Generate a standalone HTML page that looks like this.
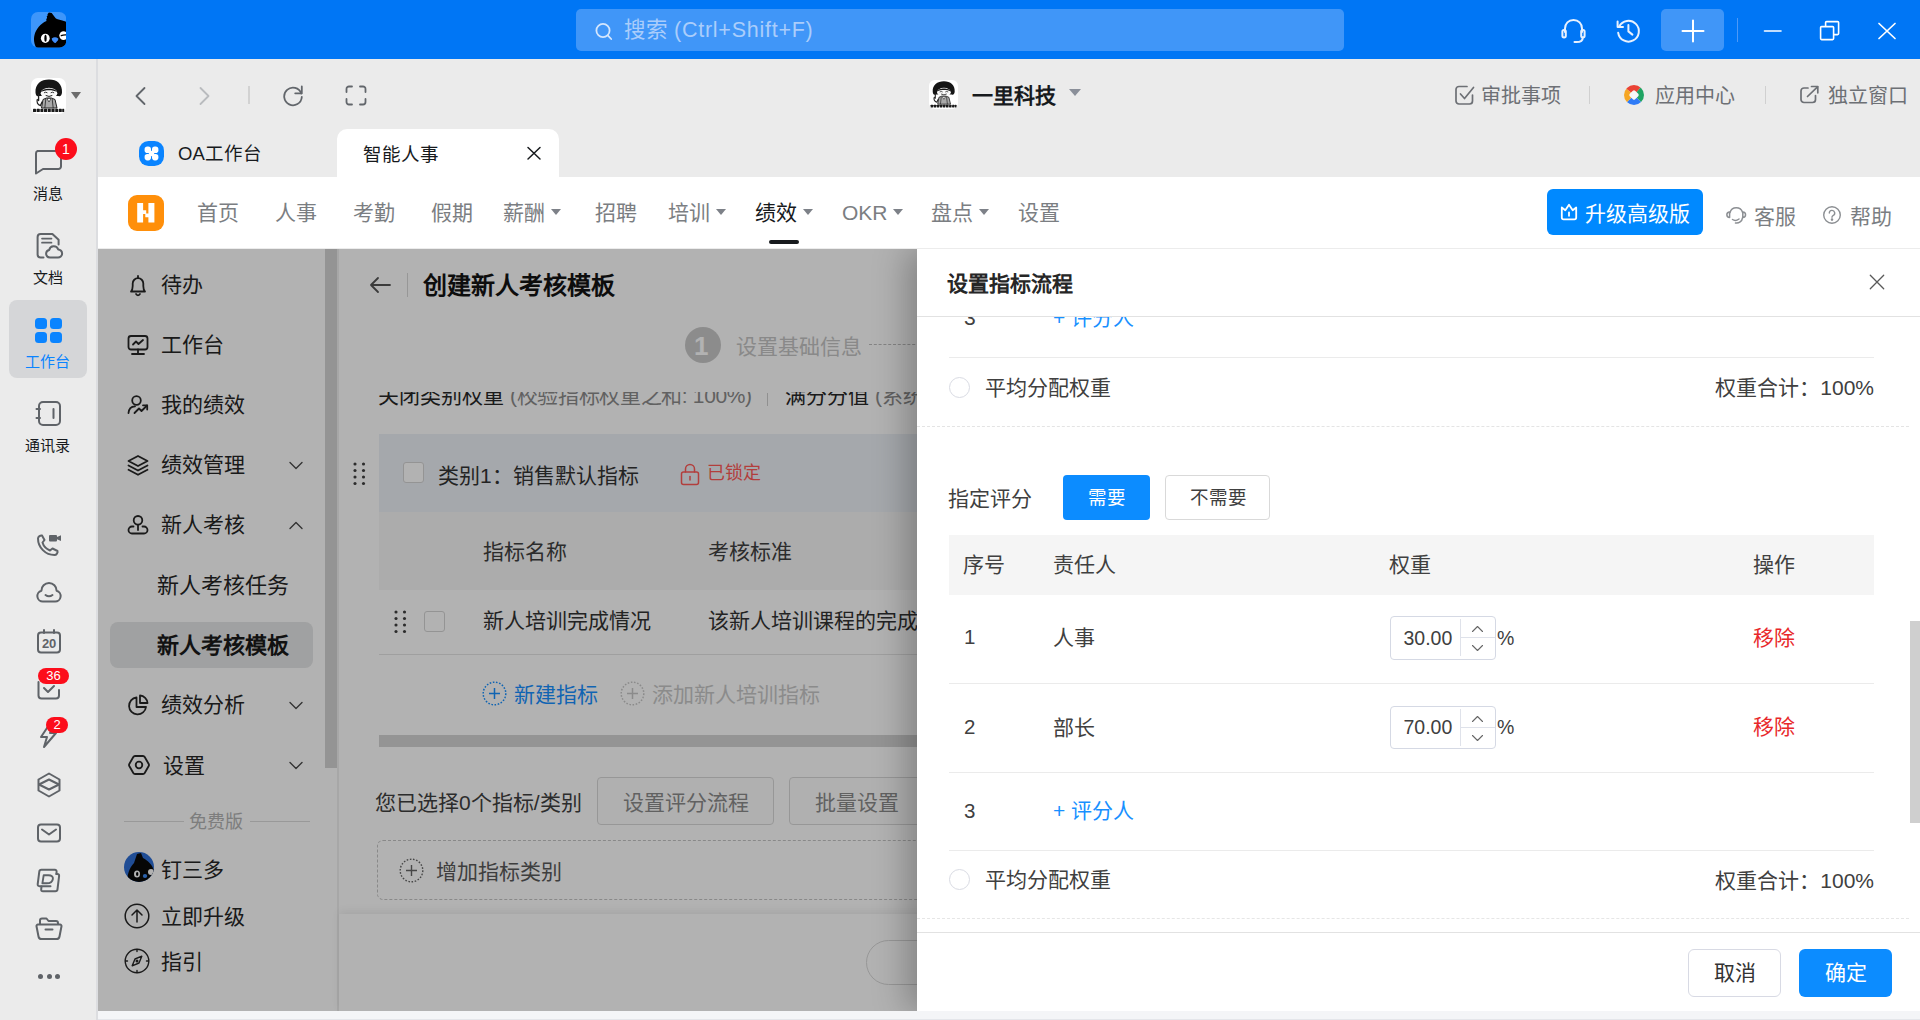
<!DOCTYPE html>
<html lang="zh-CN">
<head>
<meta charset="utf-8">
<title>DingTalk</title>
<style>
*{box-sizing:border-box;margin:0;padding:0}
html,body{width:1920px;height:1020px;overflow:hidden;background:#ebebeb;font-family:"Liberation Sans",sans-serif;color:#171a1d;line-height:1}
.abs{position:absolute}
svg{display:block}
/* ---------- title bar ---------- */
#titlebar{position:absolute;left:0;top:0;width:1920px;height:59px;background:#0076f5}
#search{position:absolute;left:576px;top:9px;width:768px;height:42px;border-radius:5px;background:#4096f8}
#search span{position:absolute;left:48px;top:11px;font-size:21.500px;color:#aacdfb;white-space:nowrap}#search span u{text-decoration:none;letter-spacing:.75px}
#plusbtn{position:absolute;left:1661px;top:9px;width:63px;height:42px;border-radius:5px;background:#4096f8}
/* ---------- left rail ---------- */
#rail{position:absolute;left:0;top:59px;width:98px;height:961px;background:#ebebeb;border-right:2px solid #dcdde0}
.rlabel{position:absolute;left:-1px;width:97px;text-align:center;font-size:15px;margin-top:1px;color:#171a1d;white-space:nowrap}
.badge{position:absolute;background:#fc0d1b;color:#fff;font-size:13px;text-align:center;border-radius:11px;height:22px;line-height:22px}
/* ---------- shell top ---------- */
#shell{position:absolute;left:98px;top:59px;width:1822px;height:118px;background:#ebebeb}
.toplink{position:absolute;font-size:20px;color:#6d7075;white-space:nowrap}
#tab2{position:absolute;left:337px;top:129px;width:222px;height:49px;background:#fff;border-radius:10px 10px 0 0}
#tab2 span{position:absolute;left:26px;top:17px;font-size:18.500px;color:#171a1d;white-space:nowrap}
/* ---------- app header ---------- */
#apphead{position:absolute;left:98px;top:177px;width:1822px;height:72px;background:#fff;border-bottom:1px solid #ececec}
.nav{position:absolute;top:25px;font-size:21px;color:#7b7e82;white-space:nowrap}
.nav.act{color:#171a1d}
.caret{display:inline-block;width:0;height:0;border-left:5.500px solid transparent;border-right:5.500px solid transparent;border-top:6.500px solid #7d8188;vertical-align:middle;margin-left:6px;margin-top:-4px}.nav.lat .caret{margin-left:5px}
#upgrade{position:absolute;left:1449px;top:12px;width:156px;height:46px;border-radius:6px;background:#0089ff;color:#fff;font-size:20px}
#upgrade span{position:absolute;left:38px;top:14px;font-size:21px;white-space:nowrap}
/* ---------- app body (under mask) ---------- */
#appbody{position:absolute;left:98px;top:249px;width:1822px;height:762px;background:#fff;overflow:hidden}
#bottomstrip{position:absolute;left:98px;top:1011px;width:1822px;height:9px;background:#f4f5f7;border-bottom:1px solid #e4e6ea}
#mask{position:absolute;left:98px;top:249px;width:819px;height:762px;background:rgba(0,0,0,.3)}
/* ---------- drawer ---------- */
#drawer{position:absolute;left:917px;top:249px;width:1003px;height:762px;background:#fff;box-shadow:-10px 0 32px rgba(0,0,0,.27);clip-path:inset(0 0 0 -60px)}
#dhead{position:absolute;left:0;top:0;width:1003px;height:68px;border-bottom:1px solid #e2e2e2;background:#fff}
#dhead b{position:absolute;left:30px;top:24px;font-size:21px;color:#262626;white-space:nowrap}
#dfoot{position:absolute;left:0;top:683px;width:1003px;height:78px;border-top:1px solid #e2e2e2;background:#fff}
</style>
</head>
<body>
<div id="titlebar">
  <!-- app logo -->
  <svg class="abs" style="left:30.700px;top:12px" width="35.300" height="35.600" viewBox="0 0 35.300 35.600">
    <defs><clipPath id="lg"><rect x="0" y="0" width="35.300" height="35.600" rx="7"/></clipPath></defs>
    <rect x="0" y="0" width="35.300" height="35.600" rx="7" fill="#3e96fa"/>
    <g clip-path="url(#lg)">
      <path d="M5.400 36 C2.600 31.500 2.600 26.500 3.500 23 C5 17 9.500 11.500 15.500 8.900 L15.200 7.500 L16.100 5.700 L15.700 4.300 L16.700 3.400 L16.500 2.300 L17.900 0.500 L20.700 0.900 L23.500 4.700 C24.300 5.800 25 6.600 25.900 7.050 C28 8 31 8.300 32.900 8.900 C34 9.300 36 10 36 10 V36 Z" fill="#000"/>
      <ellipse cx="14.300" cy="26.300" rx="4.400" ry="4.600" fill="#fff"/><ellipse cx="14.500" cy="26.300" rx="1.150" ry="3.500" fill="#000"/>
      <circle cx="32.600" cy="23.600" r="4.300" fill="#fff"/><path d="M30.300 23.700 Q32.500 22.600 35.500 22.900" stroke="#000" stroke-width="1.300" fill="none" stroke-linecap="round"/>
      <path d="M20.700 26.600 Q24 24 27.300 26.600 Q27.600 28.300 24.600 30.900 Q23.800 31.200 23 30.600 Q20.300 28.300 20.700 26.600 Z" fill="#3f8cf8"/>
    </g>
  </svg>
  <div id="search"><span>搜索 <u>(Ctrl+Shift+F)</u></span>
    <svg class="abs" style="left:17px;top:11px" width="22" height="22" viewBox="0 0 22 22" fill="none" stroke="#d4e6fd" stroke-width="1.8" stroke-linecap="round"><circle cx="10" cy="10.5" r="6.6"/><path d="M15 15.6 L18.2 19"/></svg>
  </div>
  <!-- headset -->
  <svg class="abs" style="left:1559px;top:17px" width="28" height="28" viewBox="0 0 28 28" fill="none" stroke="#e8f1fe" stroke-width="2" stroke-linecap="round" stroke-linejoin="round">
    <path d="M6 15 V11.5 C6 6.5 9.6 3 14.5 3 C19.4 3 23 6.5 23 11.5 V15"/>
    <rect x="3.4" y="13" width="3.4" height="7.4" rx="1.6"/>
    <rect x="22.2" y="13" width="3.4" height="7.4" rx="1.6"/>
    <path d="M23.8 20.4 C23.8 23.4 21 25 17.6 25 H15.5"/>
  </svg>
  <!-- history -->
  <svg class="abs" style="left:1614px;top:17px" width="28" height="28" viewBox="0 0 28 28" fill="none" stroke="#e8f1fe" stroke-width="2" stroke-linecap="round" stroke-linejoin="round">
    <path d="M5.2 9.5 A10.4 10.4 0 1 1 4.2 15.8"/>
    <path d="M3.6 4.6 V10 H9"/>
    <path d="M14.4 8 V14.4 L18.4 17.6"/>
  </svg>
  <div id="plusbtn"><svg class="abs" style="left:20px;top:10px" width="24" height="24" viewBox="0 0 24 24" stroke="#fff" stroke-width="2" stroke-linecap="round"><path d="M1.5 12 H22.5 M12 1.5 V22.5"/></svg></div>
  <div class="abs" style="left:1737px;top:18px;width:1px;height:24px;background:#4d99f8"></div>
  <svg class="abs" style="left:1763px;top:20px" width="20" height="22" viewBox="0 0 20 22" stroke="#fff" stroke-width="1.6" stroke-linecap="round"><path d="M1.5 11 H18"/></svg>
  <svg class="abs" style="left:1819px;top:20px" width="22" height="22" viewBox="0 0 22 22" fill="none" stroke="#fff" stroke-width="1.6" stroke-linejoin="round"><rect x="1.6" y="6.6" width="13" height="13" rx="1"/><path d="M6.6 6 V2.6 a1 1 0 0 1 1 -1 H18.6 a1 1 0 0 1 1 1 V13.6 a1 1 0 0 1 -1 1 H15"/></svg>
  <svg class="abs" style="left:1876px;top:20px" width="22" height="22" viewBox="0 0 22 22" stroke="#fff" stroke-width="1.7" stroke-linecap="round"><path d="M3 3.5 L19 18.5 M19 3.5 L3 18.5"/></svg>
</div>
<div id="rail"></div>
<div id="railc">
  <!-- user avatar -->
  <svg class="abs" style="left:31px;top:78px" width="35" height="36" viewBox="0 0 35 36">
    <rect width="35" height="36" rx="7" fill="#fff"/>
    <path d="M4.500 14.500 C4 6 10 1.500 18 1.500 C26 1.500 31.500 6 31 14.500 C30.800 17.500 29 19 27.500 18 L8 18 C6 19 4.700 17.500 4.500 14.500 Z" fill="#161616"/>
    <ellipse cx="18" cy="15.300" rx="8.300" ry="5.600" fill="#fafafa"/>
    <path d="M10 14 C11 9.500 25 9.500 26 14 C22 11.800 14 11.800 10 14 Z" fill="#161616"/>
    <path d="M13.300 14.600 q1.400 -1 2.800 0 M20 14.600 q1.400 -1 2.800 0" stroke="#222" stroke-width=".9" fill="none" stroke-linecap="round"/>
    <path d="M15 17.600 q3 1.900 6 0" stroke="#222" stroke-width="1" fill="none" stroke-linecap="round"/>
    <path d="M10.500 30 L12 21.500 L15.500 20 L20.500 20 L24 21.500 L26 30 Z" fill="#a9a9a9" stroke="#222" stroke-width="1"/>
    <path d="M16 20.500 L18 24 L20 20.500 Z" fill="#fff" stroke="#222" stroke-width=".7"/>
    <path d="M14.800 21 L13.800 30 M21.200 21 L22.200 30" stroke="#222" stroke-width=".8"/>
    <path d="M7.600 16.500 V22.500 M6.300 21.500 C5.500 24 6.500 27 9.500 27.500 L11 24" stroke="#222" stroke-width="1.300" fill="none" stroke-linecap="round"/>
    <g fill="#1a1a1a"><rect x="2" y="30.800" width="3" height="3.200" rx=".6"/><rect x="5.600" y="30.800" width="3.200" height="3.200" rx=".6"/><rect x="9.400" y="30.800" width="3" height="3.200" rx=".6"/><rect x="13" y="30.800" width="3.200" height="3.200" rx=".6"/><rect x="16.800" y="30.800" width="3" height="3.200" rx=".6"/><rect x="20.400" y="30.800" width="3.200" height="3.200" rx=".6"/><rect x="24.200" y="30.800" width="3" height="3.200" rx=".6"/><rect x="27.800" y="30.800" width="3" height="3.200" rx=".6"/><rect x="31.200" y="30.800" width="2" height="3.200" rx=".6"/></g>
  </svg>
  <div class="abs" style="left:70.500px;top:92px;width:0;height:0;border-left:5px solid transparent;border-right:5px solid transparent;border-top:7px solid #6c6c6c"></div>
  <!-- message -->
  <svg class="abs" style="left:33px;top:148px" width="32" height="30" viewBox="0 0 32 30" fill="none" stroke="#5f6368" stroke-width="2" stroke-linecap="round" stroke-linejoin="round"><path d="M4.5 3 H25.5 a2.5 2.5 0 0 1 2.5 2.5 V18.5 a2.5 2.5 0 0 1 -2.5 2.500 H10 L3 25.500 V5.500 A2.500 2.500 0 0 1 4.500 3 Z"/></svg>
  <div class="badge" style="left:55px;top:138px;width:22px;font-size:14px">1</div>
  <div class="rlabel" style="top:185px">消息</div>
  <!-- docs -->
  <svg class="abs" style="left:34px;top:231px" width="30" height="30" viewBox="0 0 30 30" fill="none" stroke="#5f6368" stroke-width="2" stroke-linecap="round" stroke-linejoin="round"><path d="M9.500 26.600 H6.600 a3 3 0 0 1 -3 -3 V6 a3 3 0 0 1 3 -3 H18.400 L24.600 8.800 V13.600"/><path d="M8 7.600 H17.500 M8 11.700 H17.500" stroke-width="1.700"/><path d="M15.800 26.600 a3.900 3.900 0 0 1 -0.600 -7.700 a4.700 4.700 0 0 1 9 -0.500 a4.100 4.100 0 0 1 -0.400 8.200 Z"/></svg>
  <div class="rlabel" style="top:269px">文档</div>
  <!-- workbench selected -->
  <div class="abs" style="left:9px;top:300px;width:78px;height:78px;border-radius:8px;background:#d5d6d8"></div>
  <div class="abs" style="left:35px;top:318px;width:12px;height:11px;border-radius:3.500px;background:#0a84ff"></div>
  <div class="abs" style="left:50px;top:318px;width:12px;height:11px;border-radius:3.500px;background:#0a84ff"></div>
  <div class="abs" style="left:35px;top:332px;width:12px;height:11px;border-radius:3.500px;background:#0a84ff"></div>
  <div class="abs" style="left:50px;top:332px;width:12px;height:11px;border-radius:3.500px;background:#0a84ff"></div>
  <div class="rlabel" style="top:353px;color:#0a84ff">工作台</div>
  <!-- contacts -->
  <svg class="abs" style="left:34px;top:399px" width="30" height="30" viewBox="0 0 30 30" fill="none" stroke="#5f6368" stroke-width="2" stroke-linecap="round" stroke-linejoin="round"><rect x="5" y="3" width="21" height="23" rx="4"/><path d="M19.500 10 V19"/><path d="M2.500 10 H6 M2.500 19 H6"/></svg>
  <div class="rlabel" style="top:437px">通讯录</div>
  <!-- phone -->
  <svg class="abs" style="left:35px;top:532px" width="28" height="26" viewBox="0 0 28 26" fill="none" stroke="#5f6368" stroke-width="2" stroke-linecap="round" stroke-linejoin="round"><path d="M3 6.500 C3 4.500 5.500 3 7 3.500 L9.500 8 L7.500 10.500 C8.500 14 11.500 17 15 18.500 L17.500 16.500 L22.500 19 C23 20.500 21.500 23 19.500 23 C10.500 23 3 15.500 3 6.500 Z"/><rect x="14" y="3" width="8" height="6.500" rx="1" fill="#5f6368" stroke="none"/><path d="M22 5 L26 3.200 V9 L22 7.200 Z" fill="#5f6368" stroke="none"/></svg>
  <!-- cloud face -->
  <svg class="abs" style="left:35px;top:580px" width="28" height="24" viewBox="0 0 28 24" fill="none" stroke="#5f6368" stroke-width="2" stroke-linecap="round" stroke-linejoin="round"><path d="M8 21.500 a5.500 5.500 0 0 1 -1.600 -10.800 a7.600 7.600 0 0 1 15.200 0 A5.500 5.500 0 0 1 20 21.500 Z"/><path d="M10.500 15 q3.500 2.600 7 0"/></svg>
  <!-- calendar -->
  <svg class="abs" style="left:35px;top:628px" width="28" height="27" viewBox="0 0 28 27" fill="none" stroke="#5f6368" stroke-width="2" stroke-linecap="round" stroke-linejoin="round"><rect x="3" y="4.500" width="22" height="20" rx="3"/><path d="M9 2 V5 M19 2 V5"/></svg>
  <div class="abs" style="left:38px;top:637px;width:22px;text-align:center;font-size:13px;font-weight:bold;color:#5f6368;letter-spacing:-.3px">20</div>
  <!-- todo -->
  <svg class="abs" style="left:35px;top:676px" width="28" height="26" viewBox="0 0 28 26" fill="none" stroke="#5f6368" stroke-width="2" stroke-linecap="round" stroke-linejoin="round"><path d="M3.500 6 V19.500 a3 3 0 0 0 3 3 H21 a3 3 0 0 0 3 -3 V14"/><path d="M9 12 L13 16 L19 10"/></svg>
  <div class="badge" style="left:38px;top:668px;width:31px;height:16px;line-height:16px;font-size:13px">36</div>
  <!-- lightning -->
  <svg class="abs" style="left:36px;top:722px" width="26" height="28" viewBox="0 0 26 28" fill="none" stroke="#5f6368" stroke-width="2" stroke-linecap="round" stroke-linejoin="round"><path d="M13 3 L5 15 H11 L8 25 L20 11 H14 L17 3"/></svg>
  <div class="badge" style="left:46px;top:717px;width:22px;height:16px;line-height:16px;font-size:13px">2</div>
  <!-- hex layers -->
  <svg class="abs" style="left:35px;top:771px" width="28" height="28" viewBox="0 0 28 28" fill="none" stroke="#5f6368" stroke-width="2" stroke-linecap="round" stroke-linejoin="round"><path d="M14 2.500 L24.500 8.500 V19.500 L14 25.500 L3.500 19.500 V8.500 Z"/><path d="M4 13.500 L14 8.500 L24 13.500 L14 18.500 Z"/></svg>
  <!-- mail -->
  <svg class="abs" style="left:35px;top:821px" width="28" height="24" viewBox="0 0 28 24" fill="none" stroke="#5f6368" stroke-width="2" stroke-linecap="round" stroke-linejoin="round"><rect x="3" y="3.500" width="22" height="17" rx="3"/><path d="M7 8.500 L14 13.500 L21 8.500"/></svg>
  <!-- D -->
  <svg class="abs" style="left:35px;top:867px" width="28" height="27" viewBox="0 0 28 27" fill="none" stroke="#5f6368" stroke-width="2" stroke-linecap="round" stroke-linejoin="round"><path d="M21.400 7 L21.600 4.800 Q21.800 2.800 19.800 2.800 H6.400 Q4.500 2.800 4.300 4.700 L2.700 17.200 Q2.500 19.200 4.500 19.200 H15.500"/><path d="M21.400 7 H22.300 Q24.300 7 24.100 9 L22.500 22.400 Q22.300 24.300 20.300 24.300 H8 Q6 24.300 6.200 22.400 L6.500 19.400"/><path d="M8.700 8.200 L7.400 16.300 H11.500 C15.300 16.300 17.600 14.200 17.900 11.800 C18.200 9.500 16.500 8.200 13.500 8.200 Z" stroke-width="1.900"/></svg>
  <!-- folder box -->
  <svg class="abs" style="left:34px;top:915px" width="30" height="27" viewBox="0 0 30 27" fill="none" stroke="#5f6368" stroke-width="2" stroke-linecap="round" stroke-linejoin="round"><path d="M6 9 V5.500 a2 2 0 0 1 2 -2 H12.500 L14.500 6 H22 a2 2 0 0 1 2 2 V9"/><path d="M4 9.500 H26 a1.500 1.500 0 0 1 1.500 1.800 L25.500 21.500 a3 3 0 0 1 -3 2.500 H7.500 a3 3 0 0 1 -3 -2.500 L2.500 11.300 A1.500 1.500 0 0 1 4 9.500 Z"/><path d="M11.500 14.500 H18.500"/></svg>
  <!-- dots -->
  <div class="abs" style="left:38px;top:974px;width:5px;height:5px;border-radius:50%;background:#5f6368"></div>
  <div class="abs" style="left:46.500px;top:974px;width:5px;height:5px;border-radius:50%;background:#5f6368"></div>
  <div class="abs" style="left:55px;top:974px;width:5px;height:5px;border-radius:50%;background:#5f6368"></div>
</div>
<div id="shell">
  <svg class="abs" style="left:35px;top:27px" width="16" height="20" viewBox="0 0 16 20" fill="none" stroke="#62666b" stroke-width="1.8" stroke-linecap="round" stroke-linejoin="round"><path d="M11.500 2 L3.500 10 L11.500 18"/></svg>
  <svg class="abs" style="left:98px;top:27px" width="16" height="20" viewBox="0 0 16 20" fill="none" stroke="#b9bbbe" stroke-width="1.8" stroke-linecap="round" stroke-linejoin="round"><path d="M4.500 2 L12.500 10 L4.500 18"/></svg>
  <div class="abs" style="left:150px;top:27px;width:2px;height:18px;background:#d2d2d2"></div>
  <svg class="abs" style="left:183px;top:24px" width="24" height="24" viewBox="0 0 24 24" fill="none" stroke="#62666b" stroke-width="1.8" stroke-linecap="round" stroke-linejoin="round"><path d="M20.300 10.500 A8.800 8.800 0 1 0 20.800 14"/><path d="M20.800 3.500 V10.300 H14.200"/></svg>
  <svg class="abs" style="left:246px;top:25px" width="24" height="24" viewBox="0 0 24 24" fill="none" stroke="#62666b" stroke-width="1.8" stroke-linecap="round" stroke-linejoin="round"><path d="M2.500 8 V5 a2.500 2.500 0 0 1 2.500 -2.500 H8"/><path d="M16 2.500 H19 a2.500 2.500 0 0 1 2.500 2.500 V8"/><path d="M21.500 15 V18 a2.500 2.500 0 0 1 -2.500 2.500 H16"/><path d="M8 20.500 H5 a2.500 2.500 0 0 1 -2.500 -2.500 V15"/></svg>
  <!-- company -->
  <svg class="abs" style="left:830.500px;top:21px" width="29" height="29" viewBox="0 0 35 36" preserveAspectRatio="none">
    <rect width="35" height="36" rx="7" fill="#fff"/>
    <path d="M4.500 14.500 C4 6 10 1.500 18 1.500 C26 1.500 31.500 6 31 14.500 C30.800 17.500 29 19 27.500 18 L8 18 C6 19 4.700 17.500 4.500 14.500 Z" fill="#161616"/>
    <ellipse cx="18" cy="15.300" rx="8.300" ry="5.600" fill="#fafafa"/>
    <path d="M10 14 C11 9.500 25 9.500 26 14 C22 11.800 14 11.800 10 14 Z" fill="#161616"/>
    <path d="M13.300 14.600 q1.400 -1 2.800 0 M20 14.600 q1.400 -1 2.800 0" stroke="#222" stroke-width=".9" fill="none" stroke-linecap="round"/>
    <path d="M15 17.600 q3 1.900 6 0" stroke="#222" stroke-width="1" fill="none" stroke-linecap="round"/>
    <path d="M10.500 30 L12 21.500 L15.500 20 L20.500 20 L24 21.500 L26 30 Z" fill="#a9a9a9" stroke="#222" stroke-width="1"/>
    <path d="M16 20.500 L18 24 L20 20.500 Z" fill="#fff" stroke="#222" stroke-width=".7"/>
    <path d="M14.800 21 L13.800 30 M21.200 21 L22.200 30" stroke="#222" stroke-width=".8"/>
    <path d="M7.600 16.500 V22.500 M6.300 21.500 C5.500 24 6.500 27 9.500 27.500 L11 24" stroke="#222" stroke-width="1.300" fill="none" stroke-linecap="round"/>
    <g fill="#1a1a1a"><rect x="2" y="30.800" width="3" height="3.200" rx=".6"/><rect x="5.600" y="30.800" width="3.200" height="3.200" rx=".6"/><rect x="9.400" y="30.800" width="3" height="3.200" rx=".6"/><rect x="13" y="30.800" width="3.200" height="3.200" rx=".6"/><rect x="16.800" y="30.800" width="3" height="3.200" rx=".6"/><rect x="20.400" y="30.800" width="3.200" height="3.200" rx=".6"/><rect x="24.200" y="30.800" width="3" height="3.200" rx=".6"/><rect x="27.800" y="30.800" width="3" height="3.200" rx=".6"/><rect x="31.200" y="30.800" width="2" height="3.200" rx=".6"/></g>
  </svg>
  <div class="abs" style="left:874px;top:26px;font-size:21px;font-weight:bold;color:#171a1d;white-space:nowrap">一里科技</div>
  <div class="abs" style="left:971px;top:30px;width:0;height:0;border-left:6px solid transparent;border-right:6px solid transparent;border-top:7.500px solid #8a8f99"></div>
  <!-- links -->
  <svg class="abs" style="left:1355px;top:24px" width="24" height="24" viewBox="0 0 24 24" fill="none" stroke="#6d7075" stroke-width="1.700" stroke-linecap="round" stroke-linejoin="round"><path d="M19.500 12 V18 a3 3 0 0 1 -3 3 H6 a3 3 0 0 1 -3 -3 V6.500 a3 3 0 0 1 3 -3 H14"/><path d="M7.500 11 L11.500 15.500 L20.500 4.500"/></svg>
  <div class="toplink" style="left:1383px;top:27px">审批事项</div>
  <div class="abs" style="left:1491px;top:27px;width:1px;height:18px;background:#d0d0d0"></div>
  <svg class="abs" style="left:1525px;top:25px" width="22" height="22" viewBox="0 0 22 22"><defs><clipPath id="acc"><circle cx="11" cy="11" r="10"/></clipPath></defs><g clip-path="url(#acc)"><path d="M11 11 L1 3 L11 -3 L19 2 Z" fill="#ea4335"/><path d="M11 11 L19 2 L25 11 L20 20 Z" fill="#1fa463"/><path d="M11 11 L20 20 L11 25 L3 19 Z" fill="#2f7bf6"/><path d="M11 11 L3 19 L-3 11 L1 3 Z" fill="#f6a623"/></g><rect x="7.200" y="7.200" width="7.600" height="7.600" rx="1.600" fill="#f7f7f7" transform="rotate(45 11 11)"/></svg>
  <div class="toplink" style="left:1557px;top:27px">应用中心</div>
  <div class="abs" style="left:1667px;top:27px;width:1px;height:18px;background:#d0d0d0"></div>
  <svg class="abs" style="left:1701px;top:25px" width="22" height="22" viewBox="0 0 22 22" fill="none" stroke="#6d7075" stroke-width="1.700" stroke-linecap="round" stroke-linejoin="round"><path d="M16.500 11.500 V15.500 a3 3 0 0 1 -3 3 H5 a3 3 0 0 1 -3 -3 V7 a3 3 0 0 1 3 -3 H9"/><path d="M8.500 12.500 L18.500 2.800"/><path d="M12.500 2.500 H18.800 V8.800"/></svg>
  <div class="toplink" style="left:1730px;top:27px">独立窗口</div>
  <!-- OA tab -->
  <svg class="abs" style="left:41px;top:82px" width="25" height="25" viewBox="0 0 25 25"><rect width="25" height="25" rx="9.500" fill="#0a84ff"/><g fill="#fff"><rect x="5.600" y="5.600" width="6.400" height="6.400" rx="2.800"/><rect x="13" y="5.600" width="6.400" height="6.400" rx="2.800"/><rect x="5.600" y="13" width="6.400" height="6.400" rx="2.800"/><rect x="13" y="13" width="6.400" height="6.400" rx="2.800"/><rect x="9.800" y="9.800" width="5.400" height="5.400"/></g></svg>
  <div class="abs" style="left:80px;top:86px;font-size:18.500px;color:#171a1d;white-space:nowrap">OA工作台</div>
</div>
<div id="tab2"><span>智能人事</span>
  <svg class="abs" style="left:189px;top:16px" width="16" height="16" viewBox="0 0 16 16" stroke="#171a1d" stroke-width="1.500" stroke-linecap="round"><path d="M2 2.500 L14 14 M14 2.500 L2 14"/></svg>
</div>
<div id="apphead">
  <svg class="abs" style="left:30px;top:18px" width="36" height="36" viewBox="0 0 36 36"><rect width="36" height="36" rx="9" fill="#ff8f0a"/><path d="M9.200 8 H15.100 V15.300 H18.200 V18.600 H20.400 V8 H26.400 V27.500 H20.400 V22.300 H17.300 V19 H15.100 V27.500 H9.200 Z" fill="#fff"/></svg>
  <div class="nav" style="left:99px">首页</div>
  <div class="nav" style="left:177px">人事</div>
  <div class="nav" style="left:255px">考勤</div>
  <div class="nav" style="left:333px">假期</div>
  <div class="nav" style="left:405px">薪酬<i class="caret"></i></div>
  <div class="nav" style="left:497px">招聘</div>
  <div class="nav" style="left:570px">培训<i class="caret"></i></div>
  <div class="nav act" style="left:657px">绩效<i class="caret"></i></div>
  <div class="abs" style="left:671px;top:63px;width:30px;height:4px;border-radius:2px;background:#171a1d"></div>
  <div class="nav lat" style="left:744px">OKR<i class="caret"></i></div>
  <div class="nav" style="left:833px">盘点<i class="caret"></i></div>
  <div class="nav" style="left:920px">设置</div>
  <div id="upgrade"><span>升级高级版</span>
    <svg class="abs" style="left:12px;top:13px" width="20" height="20" viewBox="0 0 20 20" fill="none" stroke="#fff" stroke-width="1.800" stroke-linecap="round" stroke-linejoin="round"><path d="M2.800 5.500 L6.300 8.300 L10 2.800 L13.700 8.300 L17.200 5.500 V15.500 a1.800 1.800 0 0 1 -1.800 1.800 H4.600 a1.800 1.800 0 0 1 -1.800 -1.800 Z"/><path d="M10 10.500 V13.800"/></svg>
  </div>
  <svg class="abs" style="left:1627px;top:27px" width="22" height="22" viewBox="0 0 22 22" fill="none" stroke="#8c8f93" stroke-width="1.500" stroke-linecap="round" stroke-linejoin="round"><path d="M5 8.500 a6.600 6.600 0 0 1 12.600 0"/><path d="M17.800 8 a2.600 2.600 0 0 1 0 5.500 V8 Z"/><path d="M4.600 8 a2.600 2.600 0 0 0 0 5.500 V8 Z"/><path d="M17.500 13.800 C17 17.500 14 19.500 10.500 19 "/><path d="M7.500 15.500 q3 2 6.500 -.5"/></svg>
  <div class="abs" style="left:1656px;top:29px;font-size:21px;color:#7b7e82;white-space:nowrap">客服</div>
  <svg class="abs" style="left:1724px;top:28px" width="20" height="20" viewBox="0 0 20 20" fill="none" stroke="#8c8f93" stroke-width="1.400" stroke-linecap="round" stroke-linejoin="round"><circle cx="10" cy="10" r="8.300"/><path d="M7.300 8 a2.700 2.700 0 1 1 3.700 2.600 c-.8 .4 -1 .9 -1 1.700"/><circle cx="10" cy="14.600" r=".6" fill="#8c8f93"/></svg>
  <div class="abs" style="left:1752px;top:29px;font-size:21px;color:#7b7e82;white-space:nowrap">帮助</div>
</div>
<div id="appbody">
<!--AB-->
<div class="abs" style="left:0px;top:-1px;width:227px;height:764px;background:#fff"></div>
<div class="abs" style="left:227px;top:-1px;width:12px;height:520px;background:#d4d4d4"></div>
<div class="abs" style="left:239px;top:-1px;width:2px;height:764px;background:#f0f0f0"></div>
<svg class="abs" style="left:28px;top:24px" width="24" height="24" viewBox="0 0 24 24" fill="none" stroke="#262626" stroke-width="1.8" stroke-linecap="round" stroke-linejoin="round"><path d="M5 18.5 H19 C17.6 17 17.3 15.5 17.3 13 V10.5 a5.300 5.300 0 0 0 -10.600 0 V13 C6.700 15.500 6.400 17 5 18.500 Z"/><path d="M12 3 V5"/><path d="M10 21 a2.200 2.200 0 0 0 4 0"/></svg>
<svg class="abs" style="left:28px;top:84px" width="24" height="24" viewBox="0 0 24 24" fill="none" stroke="#262626" stroke-width="1.8" stroke-linecap="round" stroke-linejoin="round"><rect x="2.500" y="3" width="19" height="13.500" rx="2.500"/><path d="M7 11.500 L10 8.500 L12.500 11 L17 7"/><path d="M12 16.500 V20.500 M6 21 H18"/></svg>
<svg class="abs" style="left:28px;top:144px" width="24" height="24" viewBox="0 0 24 24" fill="none" stroke="#262626" stroke-width="1.8" stroke-linecap="round" stroke-linejoin="round"><circle cx="10.500" cy="7.500" r="4.300"/><path d="M2.500 20 C2.800 15.500 5.500 13.500 9 13.300"/><path d="M8.500 20 L13 15.500 L15.500 18 L21 12.500"/><path d="M17 12.300 H21.200 V16.500"/></svg>
<svg class="abs" style="left:28px;top:204px" width="24" height="24" viewBox="0 0 24 24" fill="none" stroke="#262626" stroke-width="1.8" stroke-linecap="round" stroke-linejoin="round"><path d="M12 3 L21.500 8 L12 13 L2.500 8 Z"/><path d="M2.500 12.500 L12 17.500 L21.500 12.500"/><path d="M2.500 16.800 L12 21.800 L21.500 16.800"/></svg>
<svg class="abs" style="left:28px;top:264px" width="24" height="24" viewBox="0 0 24 24" fill="none" stroke="#262626" stroke-width="1.8" stroke-linecap="round" stroke-linejoin="round"><circle cx="12" cy="7.300" r="4.300"/><path d="M7.500 13.500 H6 a3.500 3.500 0 0 0 0 7 H18 a3.500 3.500 0 0 0 0 -7 H16.500"/><path d="M12 12 V17"/></svg>
<svg class="abs" style="left:28px;top:444px" width="24" height="24" viewBox="0 0 24 24" fill="none" stroke="#262626" stroke-width="1.8" stroke-linecap="round" stroke-linejoin="round"><path d="M10.500 4.500 a8.500 8.500 0 1 0 9.500 9.500 H10.500 Z"/><path d="M14 2.500 a8 8 0 0 1 7.500 7.500 H14 Z"/></svg>
<svg class="abs" style="left:29px;top:504px" width="24" height="24" viewBox="0 0 24 24" fill="none" stroke="#262626" stroke-width="1.8" stroke-linecap="round" stroke-linejoin="round"><path d="M8 3 H16 a2 2 0 0 1 1.700 1 L21.700 11 a2 2 0 0 1 0 2 L17.700 20 a2 2 0 0 1 -1.700 1 H8 a2 2 0 0 1 -1.700 -1 L2.300 13 a2 2 0 0 1 0 -2 L6.300 4 A2 2 0 0 1 8 3 Z"/><circle cx="12" cy="12" r="3.300"/></svg>
<div class="abs" style="left:63px;top:25.3px;font-size:21px;color:#262626;white-space:nowrap;">待办</div>
<div class="abs" style="left:63px;top:85.3px;font-size:21px;color:#262626;white-space:nowrap;">工作台</div>
<div class="abs" style="left:63px;top:145.3px;font-size:21px;color:#262626;white-space:nowrap;">我的绩效</div>
<div class="abs" style="left:63px;top:205.3px;font-size:21px;color:#262626;white-space:nowrap;">绩效管理</div>
<div class="abs" style="left:63px;top:265.3px;font-size:21px;color:#262626;white-space:nowrap;">新人考核</div>
<div class="abs" style="left:63px;top:445.3px;font-size:21px;color:#262626;white-space:nowrap;">绩效分析</div>
<div class="abs" style="left:64.5px;top:506.0px;font-size:21px;color:#262626;white-space:nowrap;">设置</div>
<svg class="abs" style="left:190px;top:209.5px" width="16" height="13" viewBox="0 0 16 13" fill="none" stroke="#4a4a4a" stroke-width="1.400" stroke-linecap="round" stroke-linejoin="round"><path d="M2 3.500 L8 9.500 L14 3.500"/></svg>
<svg class="abs" style="left:190px;top:269.5px" width="16" height="13" viewBox="0 0 16 13" fill="none" stroke="#4a4a4a" stroke-width="1.400" stroke-linecap="round" stroke-linejoin="round"><path d="M2 9.500 L8 3.500 L14 9.500"/></svg>
<svg class="abs" style="left:190px;top:449.5px" width="16" height="13" viewBox="0 0 16 13" fill="none" stroke="#4a4a4a" stroke-width="1.400" stroke-linecap="round" stroke-linejoin="round"><path d="M2 3.500 L8 9.500 L14 3.500"/></svg>
<svg class="abs" style="left:190px;top:509.5px" width="16" height="13" viewBox="0 0 16 13" fill="none" stroke="#4a4a4a" stroke-width="1.400" stroke-linecap="round" stroke-linejoin="round"><path d="M2 3.500 L8 9.500 L14 3.500"/></svg>
<div class="abs" style="left:59px;top:325.7px;font-size:22px;color:#262626;white-space:nowrap;">新人考核任务</div>
<div class="abs" style="left:12px;top:373px;width:203px;height:46px;background:#e6e7e8;border-radius:8px"></div>
<div class="abs" style="left:59px;top:386.2px;font-size:22px;color:#1a1a1a;white-space:nowrap;font-weight:bold;">新人考核模板</div>
<div class="abs" style="left:26px;top:572px;width:60px;height:1px;background:#dcdcdc"></div>
<div class="abs" style="left:152px;top:572px;width:60px;height:1px;background:#dcdcdc"></div>
<div class="abs" style="left:91px;top:564.0px;font-size:18px;color:#b4b4b4;white-space:nowrap;">免费版</div>
<svg class="abs" style="left:26px;top:603px" width="30" height="30" viewBox="0 0 30 30"><defs><clipPath id="dsd"><circle cx="15" cy="15" r="15"/></clipPath></defs><g clip-path="url(#dsd)"><rect width="30" height="30" fill="#2f6fd6"/><path d="M13 2 L17 1 L19 6 C25 9 30 15 31 22 L31 31 L3 31 C3 24 5 16 10 11 Z" fill="#0a0a0a"/><ellipse cx="13" cy="22" rx="3" ry="3.600" fill="#fff"/><ellipse cx="13.200" cy="22" rx="1.200" ry="2" fill="#000"/><circle cx="27" cy="20" r="3" fill="#fff"/><ellipse cx="21" cy="24" rx="2.200" ry="2" fill="#3d8bf5"/></g></svg>
<div class="abs" style="left:63px;top:610.1px;font-size:21px;color:#262626;white-space:nowrap;">钉三多</div>
<svg class="abs" style="left:26px;top:654px" width="26" height="26" viewBox="0 0 26 26" fill="none" stroke="#262626" stroke-width="1.500" stroke-linecap="round" stroke-linejoin="round"><circle cx="13" cy="13" r="11.800"/><path d="M13 19 V7.500 M8 12 L13 7 L18 12"/></svg>
<div class="abs" style="left:63px;top:657.1px;font-size:21px;color:#262626;white-space:nowrap;">立即升级</div>
<svg class="abs" style="left:26px;top:699px" width="26" height="26" viewBox="0 0 26 26" fill="none" stroke="#262626" stroke-width="1.400" stroke-linecap="round" stroke-linejoin="round"><circle cx="13" cy="13" r="11.800"/><path d="M17.800 8.200 L15 15 L8.200 17.800 L11 11 Z"/><circle cx="13" cy="13" r=".8"/><path d="M13 1.500 V3.500 M13 22.500 V24.500 M1.500 13 H3.500 M22.500 13 H24.500"/></svg>
<div class="abs" style="left:63px;top:702.1px;font-size:21px;color:#262626;white-space:nowrap;">指引</div>
<svg class="abs" style="left:270px;top:27px" width="24" height="18" viewBox="0 0 24 18" fill="none" stroke="#555" stroke-width="1.800" stroke-linecap="round" stroke-linejoin="round"><path d="M22 9 H3 M10 2 L3 9 L10 16"/></svg>
<div class="abs" style="left:309px;top:24px;width:1px;height:24px;background:#d9d9d9"></div>
<div class="abs" style="left:325px;top:24.7px;font-size:24px;color:#141414;white-space:nowrap;font-weight:bold;">创建新人考核模板</div>
<div class="abs" style="left:587px;top:78px;width:36px;height:36px;background:#c9c9c9;border-radius:50%"></div>
<div class="abs" style="left:596px;top:83.8px;font-size:26px;color:#fff;white-space:nowrap;font-weight:bold;">1</div>
<div class="abs" style="left:638px;top:86.6px;font-size:21px;color:#c4c4c4;white-space:nowrap;">设置基础信息</div>
<div class="abs" style="left:771px;top:95px;width:51px;height:1px;border-top:1px dashed #bdbdbd"></div>
<div class="abs" style="left:241px;top:143px;width:581px;height:24px;overflow:hidden"><div class="abs" style="left:39px;top:-7px;font-size:21px;white-space:nowrap;color:#262626;letter-spacing:0px">关闭类别权重</div><div class="abs" style="left:171px;top:-7px;font-size:21px;white-space:nowrap;color:#8c8c8c;letter-spacing:-0.35px">(校验指标权重之和: 100%)</div><div class="abs" style="left:428px;top:1px;width:1px;height:13px;background:#cfcfcf"></div><div class="abs" style="left:446px;top:-7px;font-size:21px;white-space:nowrap;color:#262626;letter-spacing:0px">满分分值</div><div class="abs" style="left:536px;top:-7px;font-size:21px;white-space:nowrap;color:#8c8c8c;letter-spacing:0px">(系统默认)</div></div>
<div class="abs" style="left:281px;top:185px;width:541px;height:77.5px;background:#edf1f7"></div>
<svg class="abs" style="left:255px;top:212.5px" width="13" height="24" viewBox="0 0 13 24" fill="#404040" stroke="none"><circle cx="2" cy="2" r="1.550"/><circle cx="10.5" cy="2" r="1.550"/><circle cx="2" cy="8.5" r="1.550"/><circle cx="10.5" cy="8.5" r="1.550"/><circle cx="2" cy="15" r="1.550"/><circle cx="10.5" cy="15" r="1.550"/><circle cx="2" cy="21.5" r="1.550"/><circle cx="10.5" cy="21.5" r="1.550"/></svg>
<div class="abs" style="left:305px;top:213px;width:21px;height:21px;background:#fff;border:1px solid #d4d4d4;border-radius:3px"></div>
<div class="abs" style="left:340px;top:215.6px;font-size:21px;color:#333;white-space:nowrap;">类别1：销售默认指标</div>
<svg class="abs" style="left:582px;top:214px" width="20" height="23" viewBox="0 0 20 23" fill="none" stroke="#ff5a57" stroke-width="1.500" stroke-linecap="round" stroke-linejoin="round"><rect x="1.500" y="9" width="17" height="12.500" rx="2"/><path d="M5.500 9 V6 a4.500 4.500 0 0 1 9 0 V9"/><path d="M10 13.500 V17"/></svg>
<div class="abs" style="left:609px;top:215.0px;font-size:18px;color:#ff5a57;white-space:nowrap;">已锁定</div>
<div class="abs" style="left:281px;top:262.5px;width:541px;height:78px;background:#f7f7f7"></div>
<div class="abs" style="left:385px;top:292.1px;font-size:21px;color:#404040;white-space:nowrap;">指标名称</div>
<div class="abs" style="left:610px;top:292.1px;font-size:21px;color:#404040;white-space:nowrap;">考核标准</div>
<svg class="abs" style="left:296px;top:360.5px" width="13" height="24" viewBox="0 0 13 24" fill="#404040" stroke="none"><circle cx="2" cy="2" r="1.550"/><circle cx="10.5" cy="2" r="1.550"/><circle cx="2" cy="8.5" r="1.550"/><circle cx="10.5" cy="8.5" r="1.550"/><circle cx="2" cy="15" r="1.550"/><circle cx="10.5" cy="15" r="1.550"/><circle cx="2" cy="21.5" r="1.550"/><circle cx="10.5" cy="21.5" r="1.550"/></svg>
<div class="abs" style="left:326px;top:362px;width:21px;height:21px;background:#fff;border:1px solid #d4d4d4;border-radius:3px"></div>
<div class="abs" style="left:385px;top:360.9px;font-size:21px;color:#333;white-space:nowrap;">新人培训完成情况</div>
<div class="abs" style="left:610px;top:360.9px;font-size:21px;color:#333;white-space:nowrap;">该新人培训课程的完成情况</div>
<div class="abs" style="left:281px;top:405px;width:541px;height:1px;background:#e4e4e4"></div>
<svg class="abs" style="left:384px;top:432px" width="25" height="25" viewBox="0 0 25 25" fill="none" stroke="#1890ff" stroke-width="1.500"><circle cx="12.500" cy="12.500" r="11.300" stroke-dasharray="1.600 1.600"/><path d="M12.500 7 V18 M7 12.500 H18"/></svg>
<div class="abs" style="left:416px;top:434.6px;font-size:21px;color:#1890ff;white-space:nowrap;">新建指标</div>
<svg class="abs" style="left:522px;top:432px" width="25" height="25" viewBox="0 0 25 25" fill="none" stroke="#c8c8c8" stroke-width="1.500"><circle cx="12.500" cy="12.500" r="11.300" stroke-dasharray="1.600 1.600"/><path d="M12.500 7 V18 M7 12.500 H18"/></svg>
<div class="abs" style="left:554px;top:434.6px;font-size:21px;color:#c8c8c8;white-space:nowrap;">添加新人培训指标</div>
<div class="abs" style="left:281px;top:486px;width:541px;height:12px;background:#d4d4d4"></div>
<div class="abs" style="left:277px;top:542.6px;font-size:21px;color:#404040;white-space:nowrap;">您已选择0个指标/类别</div>
<div class="abs" style="left:499px;top:528px;width:177px;height:48px;background:#fdfdfd;border:1px solid #d9d9d9;border-radius:4px"></div>
<div class="abs" style="left:525px;top:542.6px;font-size:21px;color:#8c8c8c;white-space:nowrap;">设置评分流程</div>
<div class="abs" style="left:691px;top:528px;width:177px;height:48px;background:#fdfdfd;border:1px solid #d9d9d9;border-radius:4px"></div>
<div class="abs" style="left:717px;top:542.6px;font-size:21px;color:#8c8c8c;white-space:nowrap;">批量设置</div>
<div class="abs" style="left:279px;top:591px;width:1123px;height:60px;border:1px dashed #c4c4c4;border-radius:6px"></div>
<svg class="abs" style="left:301px;top:609px" width="25" height="25" viewBox="0 0 25 25" fill="none" stroke="#666" stroke-width="1.400"><circle cx="12.500" cy="12.500" r="11.300" stroke-dasharray="1.600 1.600"/><path d="M12.500 7 V18 M7 12.500 H18"/></svg>
<div class="abs" style="left:338px;top:611.6px;font-size:21px;color:#595959;white-space:nowrap;">增加指标类别</div>
<div class="abs" style="left:241px;top:665px;width:1581px;height:98px;background:#fff;box-shadow:0 -3px 8px rgba(0,0,0,.07)"></div>
<div class="abs" style="left:768px;top:691px;width:194px;height:45px;border:1px solid #d9d9d9;border-radius:23px;background:#fff"></div>
<!--/AB-->
</div>
<div id="bottomstrip"></div>
<div id="mask"></div>
<div id="drawer">
<!--DB-->
<div class="abs" style="left:0;top:68px;width:993px;height:30px;overflow:hidden"><div class="abs" style="left:47px;top:-10.500px;font-size:21px;color:#404040">3</div><div class="abs" style="left:136px;top:-10.500px;font-size:21px;color:#1890ff;white-space:nowrap">+ 评分人</div></div>
<div class="abs" style="left:32px;top:108px;width:925px;height:1px;background:#ebebeb"></div>
<div class="abs" style="left:32px;top:128px;width:21px;height:21px;border:1px solid #d9dbe3;border-radius:50%;background:#fff"></div>
<div class="abs" style="left:67.5px;top:127.6px;font-size:21px;color:#404040;white-space:nowrap;">平均分配权重</div>
<div class="abs" style="left:798px;top:128.1px;font-size:21px;color:#404040;white-space:nowrap;width:159px;text-align:right;left:auto;right:46px">权重合计：100%</div>
<div class="abs" style="left:0px;top:177px;width:992px;height:1px;border-top:1px dashed #e4e4e4"></div>
<div class="abs" style="left:31px;top:238.6px;font-size:21px;color:#404040;white-space:nowrap;">指定评分</div>
<div class="abs" style="left:146px;top:226px;width:87px;height:45px;background:#0c8cff;border-radius:4px"></div>
<div class="abs" style="left:171px;top:239.8px;font-size:18.5px;color:#fff;white-space:nowrap;">需要</div>
<div class="abs" style="left:248px;top:226px;width:105px;height:45px;background:#fff;border:1px solid #d9d9d9;border-radius:4px"></div>
<div class="abs" style="left:273px;top:239.8px;font-size:18.5px;color:#404040;white-space:nowrap;">不需要</div>
<div class="abs" style="left:32px;top:286px;width:925px;height:60px;background:#f5f5f5"></div>
<div class="abs" style="left:46px;top:305.4px;font-size:21px;color:#404040;white-space:nowrap;">序号</div>
<div class="abs" style="left:136px;top:305.4px;font-size:21px;color:#404040;white-space:nowrap;">责任人</div>
<div class="abs" style="left:472px;top:305.4px;font-size:21px;color:#404040;white-space:nowrap;">权重</div>
<div class="abs" style="left:836px;top:305.4px;font-size:21px;color:#404040;white-space:nowrap;">操作</div>
<div class="abs" style="left:47px;top:378.4px;font-size:20.5px;color:#404040;white-space:nowrap;">1</div>
<div class="abs" style="left:136px;top:378.1px;font-size:21px;color:#404040;white-space:nowrap;">人事</div>
<div class="abs" style="left:473px;top:367px;width:106px;height:43.6px;border:1px solid #d5d9e4;border-radius:4px;background:#fff"></div>
<div class="abs" style="left:486.5px;top:379.6px;font-size:19.5px;color:#404040;white-space:nowrap;">30.00</div>
<div class="abs" style="left:543px;top:370.3px;width:1px;height:37px;background:#dfe2ea"></div>
<div class="abs" style="left:544px;top:388.3px;width:34px;height:1px;background:#dfe2ea"></div>
<svg class="abs" style="left:554px;top:376.3px" width="13" height="8" viewBox="0 0 13 8" fill="none" stroke="#666" stroke-width="1.100" stroke-linecap="round" stroke-linejoin="round"><path d="M1.500 6.500 L6.500 1.500 L11.500 6.500"/></svg>
<svg class="abs" style="left:554px;top:395.3px" width="13" height="8" viewBox="0 0 13 8" fill="none" stroke="#666" stroke-width="1.100" stroke-linecap="round" stroke-linejoin="round"><path d="M1.500 1.500 L6.500 6.500 L11.500 1.500"/></svg>
<div class="abs" style="left:580px;top:379.6px;font-size:19.5px;color:#404040;white-space:nowrap;">%</div>
<div class="abs" style="left:836px;top:377.9px;font-size:21px;color:#e8282b;white-space:nowrap;">移除</div>
<div class="abs" style="left:32px;top:434px;width:925px;height:1px;background:#ebebeb"></div>
<div class="abs" style="left:47px;top:467.9px;font-size:20.5px;color:#404040;white-space:nowrap;">2</div>
<div class="abs" style="left:136px;top:467.6px;font-size:21px;color:#404040;white-space:nowrap;">部长</div>
<div class="abs" style="left:473px;top:456.5px;width:106px;height:43.6px;border:1px solid #d5d9e4;border-radius:4px;background:#fff"></div>
<div class="abs" style="left:486.5px;top:469.1px;font-size:19.5px;color:#404040;white-space:nowrap;">70.00</div>
<div class="abs" style="left:543px;top:459.8px;width:1px;height:37px;background:#dfe2ea"></div>
<div class="abs" style="left:544px;top:477.8px;width:34px;height:1px;background:#dfe2ea"></div>
<svg class="abs" style="left:554px;top:465.8px" width="13" height="8" viewBox="0 0 13 8" fill="none" stroke="#666" stroke-width="1.100" stroke-linecap="round" stroke-linejoin="round"><path d="M1.500 6.500 L6.500 1.500 L11.500 6.500"/></svg>
<svg class="abs" style="left:554px;top:484.8px" width="13" height="8" viewBox="0 0 13 8" fill="none" stroke="#666" stroke-width="1.100" stroke-linecap="round" stroke-linejoin="round"><path d="M1.500 1.500 L6.500 6.500 L11.500 1.500"/></svg>
<div class="abs" style="left:580px;top:469.1px;font-size:19.5px;color:#404040;white-space:nowrap;">%</div>
<div class="abs" style="left:836px;top:467.4px;font-size:21px;color:#e8282b;white-space:nowrap;">移除</div>
<div class="abs" style="left:32px;top:523px;width:925px;height:1px;background:#ebebeb"></div>
<div class="abs" style="left:47px;top:551.7px;font-size:20.5px;color:#404040;white-space:nowrap;">3</div>
<div class="abs" style="left:136px;top:551.4px;font-size:21px;color:#1890ff;white-space:nowrap;">+ 评分人</div>
<div class="abs" style="left:32px;top:601px;width:925px;height:1px;background:#ebebeb"></div>
<div class="abs" style="left:32px;top:620px;width:21px;height:21px;border:1px solid #d9dbe3;border-radius:50%;background:#fff"></div>
<div class="abs" style="left:67.5px;top:620.3px;font-size:21px;color:#404040;white-space:nowrap;">平均分配权重</div>
<div class="abs" style="left:798px;top:620.6px;font-size:21px;color:#404040;white-space:nowrap;width:159px;text-align:right;left:auto;right:46px">权重合计：100%</div>
<div class="abs" style="left:0px;top:669px;width:992px;height:1px;border-top:1px dashed #e6e6e6"></div>
<div class="abs" style="left:993px;top:372px;width:10px;height:202px;background:#cfcfcf"></div>
<!--/DB-->
  <div id="dhead"><b>设置指标流程</b>
    <svg class="abs" style="left:950px;top:23px" width="20" height="20" viewBox="0 0 20 20" stroke="#595959" stroke-width="1.300" stroke-linecap="round"><path d="M3.300 3.300 L16.700 16.700 M16.700 3.300 L3.300 16.700"/></svg>
  </div>
  <div id="dfoot">
<!--DF-->
<div class="abs" style="left:771px;top:15.5px;width:93px;height:48px;background:#fff;border:1px solid #d8dae4;border-radius:6px"></div>
<div class="abs" style="left:797px;top:29.1px;font-size:21px;color:#333;white-space:nowrap">取消</div>
<div class="abs" style="left:882px;top:15.5px;width:93px;height:48px;background:#0c8cff;border-radius:6px"></div>
<div class="abs" style="left:908px;top:29.1px;font-size:21px;color:#fff;white-space:nowrap">确定</div>
<!--/DF-->
  </div>
</div>
</body>
</html>
